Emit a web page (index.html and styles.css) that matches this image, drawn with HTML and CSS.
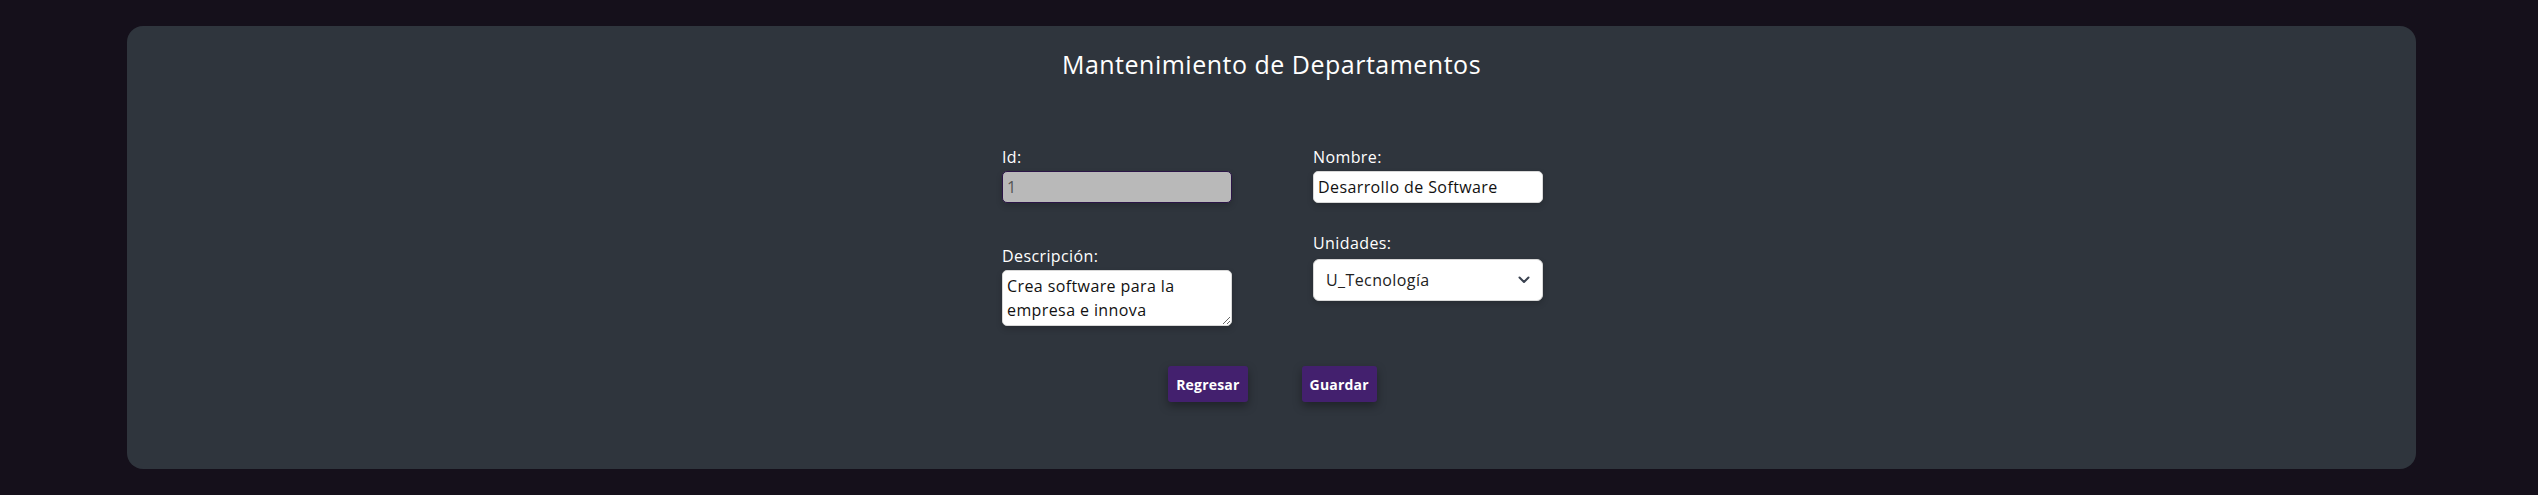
FILE: index.html
```html
<!DOCTYPE html>
<html lang="es">
<head>
<meta charset="utf-8">
<title>Mantenimiento de Departamentos</title>
<link rel="stylesheet" href="styles.css">
</head>
<body>
<main class="card">
  <h1 class="title">Mantenimiento de Departamentos</h1>
  <form class="form">
    <div class="grid">
      <div class="col">
        <div class="field">
          <label class="label" for="id">Id:</label>
          <input class="input input-disabled" id="id" type="text" value="1" disabled>
        </div>
        <div class="field field-desc">
          <label class="label" for="desc">Descripción:</label>
          <textarea class="input textarea" id="desc">Crea software para la empresa e innova</textarea>
        </div>
      </div>
      <div class="col">
        <div class="field">
          <label class="label" for="nombre">Nombre:</label>
          <input class="input" id="nombre" type="text" value="Desarrollo de Software">
        </div>
        <div class="field field-unid">
          <label class="label label-unid" for="unid">Unidades:</label>
          <div class="select-wrap">
            <select class="input select" id="unid">
              <option>U_Tecnología</option>
            </select>
            <svg class="chevron" width="12" height="8" viewBox="0 0 12 8"><path d="M1.5 1.5 L6 6 L10.5 1.5" fill="none" stroke="#3a4250" stroke-width="2" stroke-linecap="round" stroke-linejoin="round"/></svg>
          </div>
        </div>
      </div>
    </div>
    <div class="actions">
      <button type="button" class="btn">Regresar</button>
      <button type="button" class="btn">Guardar</button>
    </div>
  </form>
</main>
</body>
</html>
```
FILE: styles.css
```css
* { box-sizing: border-box; }
html, body { margin: 0; padding: 0; }
body {
  background: #15101b;
  font-family: "Open Sans", "DejaVu Sans", sans-serif;
  color: #ffffff;
  width: 2538px;
  height: 495px;
  overflow: hidden;
}
.card {
  margin: 26px 0 0 127px;
  width: 2289px;
  height: 443px;
  background: #2f353d;
  border-radius: 16px;
  padding-top: 20px;
}
.title {
  margin: 0;
  text-align: center;
  font-size: 25px;
  letter-spacing: 0.5px;
  font-weight: 400;
  line-height: 36px;
  color: #ffffff;
}
.form {
  display: flex;
  flex-direction: column;
  align-items: center;
  margin-top: 65px;
  padding-left: 2px;
}
.grid {
  display: flex;
  gap: 81px;
}
.col {
  display: flex;
  flex-direction: column;
  width: 230px;
}
.field {
  display: flex;
  flex-direction: column;
}
.field-desc { margin-top: 43px; }
.field-unid { margin-top: 30px; }
.label {
  font-size: 16px;
  letter-spacing: 0.4px;
  line-height: 20px;
  margin-bottom: 4px;
  color: #ffffff;
}
.label-unid { margin-bottom: 6px; }
.input {
  font-family: "Open Sans", "DejaVu Sans", sans-serif;
  font-size: 16px;
  letter-spacing: 0.4px;
  color: #111111;
  background: #ffffff;
  border: 1px solid #d8d8d8;
  border-radius: 5px;
  height: 32px;
  padding: 0 4px;
  box-shadow: 0 3px 6px rgba(0,0,0,0.18);
  outline: none;
  width: 100%;
}
.input-disabled {
  background: #b9b9b9;
  border-color: #2b1547;
  color: #555555;
}
.textarea {
  height: 56px;
  padding: 3px 4px;
  line-height: 24px;
  resize: vertical;
  overflow: hidden;
}
.select-wrap {
  position: relative;
}
.select {
  appearance: none;
  -webkit-appearance: none;
  height: 42px;
  padding: 0 12px;
  border-radius: 6px;
  color: #222222;
}
.chevron {
  position: absolute;
  right: 13px;
  top: 17px;
  pointer-events: none;
}
.actions {
  display: flex;
  gap: 54px;
  margin-top: 40px;
}
.btn {
  font-family: "Open Sans", "DejaVu Sans", sans-serif;
  font-size: 14px;
  font-weight: 700;
  letter-spacing: 0.2px;
  color: #ffffff;
  background: #43206e;
  border: none;
  border-radius: 3px;
  height: 36px;
  padding: 0 8px;
  box-shadow: 0 4px 10px rgba(0,0,0,0.35);
}
```
